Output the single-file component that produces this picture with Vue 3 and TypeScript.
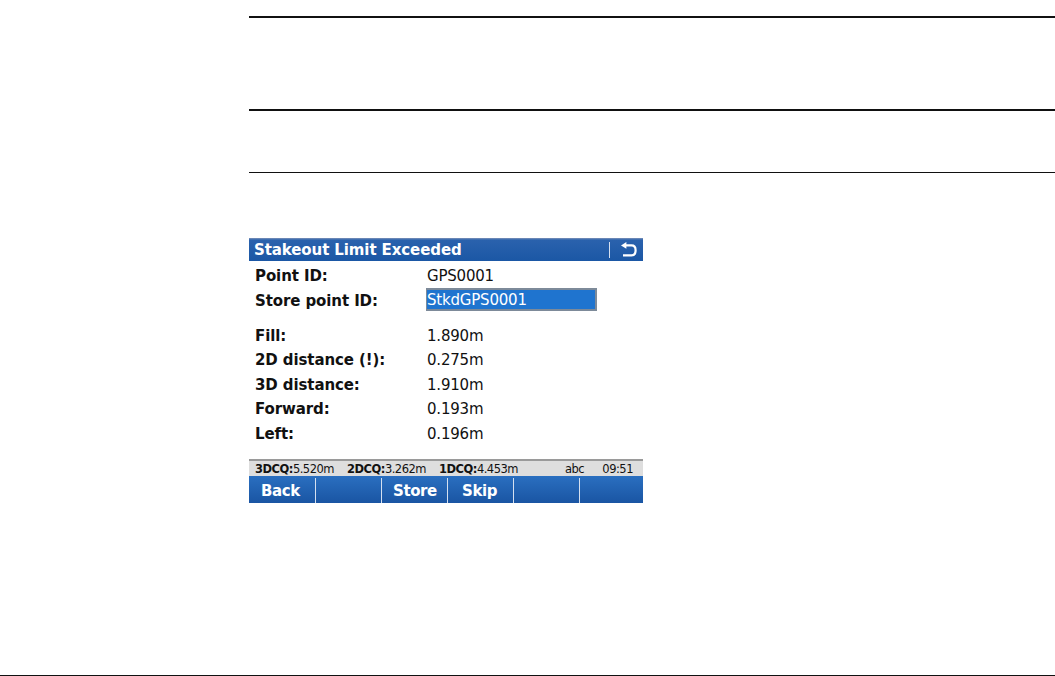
<template>
  <div class="page">
    <div class="rules">
      <div class="rule gap-a"></div>
      <div class="rule gap-b"></div>
      <div class="rule"></div>
    </div>

    <div class="screen">
      <div class="title-bar">
        <span class="title">Stakeout Limit Exceeded</span>
        <span class="title-sep"></span>
        <svg class="back-icon" width="18" height="16" viewBox="0 0 18 16">
          <path d="M4 3.4H11.5C14.2 3.4 15.6 5.2 15.6 8.2C15.6 11.2 14.2 13.4 11.5 13.4H3" fill="none" stroke="#fff" stroke-width="2.2" />
          <path d="M6.4 0L1 3.4L6.4 6.8Z" fill="#fff" />
        </svg>
      </div>

      <div class="form">
        <div class="row">
          <span class="label">Point ID:</span>
          <span class="value">GPS0001</span>
        </div>
        <div class="row">
          <span class="label">Store point ID:</span>
          <span class="input">StkdGPS0001</span>
        </div>
        <div class="results">
          <div v-for="r in results" :key="r.label" class="row">
            <span class="label">{{ r.label }}</span>
            <span class="value">{{ r.value }}</span>
          </div>
        </div>
      </div>

      <div class="status">
        <span v-for="q in quality" :key="q.label" class="cq"><b>{{ q.label }}</b>{{ q.value }}</span>
        <span class="abc">abc</span>
        <span class="clock">09:51</span>
      </div>

      <div class="softkeys">
        <div v-for="(k, i) in keys" :key="i" class="softkey">{{ k }}</div>
      </div>
    </div>

    <div class="footer-rule"></div>
  </div>
</template>

<script setup lang="ts">
const results = [
  { label: 'Fill:', value: '1.890m' },
  { label: '2D distance (!):', value: '0.275m' },
  { label: '3D distance:', value: '1.910m' },
  { label: 'Forward:', value: '0.193m' },
  { label: 'Left:', value: '0.196m' }
]

const quality = [
  { label: '3DCQ:', value: '5.520m' },
  { label: '2DCQ:', value: '3.262m' },
  { label: '1DCQ:', value: '4.453m' }
]

const keys = ['Back', '', 'Store', 'Skip', '', '']
</script>

<style>
html,
body {
  margin: 0;
  background: #fff;
  overflow: hidden;
}
</style>

<style scoped>
.page {
  width: 1055px;
  height: 676px;
  display: flex;
  flex-direction: column;
  font-family: "DejaVu Sans", sans-serif;
  color: #111;
}
.rules {
  margin: 16px 0 0 249px;
}
.rule {
  height: 1px;
  background: #111;
}
.gap-a {
  margin-bottom: 91px;
  height: 2px;
}
.gap-b {
  margin-bottom: 61px;
  height: 2px;
}
.screen {
  width: 394px;
  height: 265px;
  margin: 65px 0 0 249px;
  display: flex;
  flex-direction: column;
}
.title-bar {
  height: 23px;
  display: flex;
  align-items: center;
  padding: 0 5px;
  color: #fff;
  background: linear-gradient(#7f93b8 0, #2a62ad 2px, #1b57a5 100%);
}
.title {
  flex: 1;
  font-size: 15px;
  font-weight: 700;
  letter-spacing: -0.1px;
}
.title-sep {
  width: 1px;
  height: 16px;
  background: #d5e0f0;
  margin-right: 10px;
}
.form {
  flex: 1;
  padding-top: 3px;
}
.row {
  height: 24.5px;
  display: flex;
  align-items: center;
  padding-left: 6px;
}
.label {
  width: 172px;
  font-size: 15px;
  font-weight: 700;
  letter-spacing: -0.1px;
}
.value {
  font-size: 15px;
  letter-spacing: -0.2px;
}
.input {
  width: 171px;
  height: 23px;
  margin: 0 0 2px -1px;
  box-sizing: border-box;
  border: 2px solid #7d8a99;
  border-left-width: 1px;
  background: #1f74cf;
  color: #fff;
  font-size: 15px;
  line-height: 20px;
  letter-spacing: -0.2px;
}
.results {
  margin-top: 10.5px;
}
.status {
  height: 17px;
  box-sizing: border-box;
  display: flex;
  align-items: center;
  padding: 1px 5px 0 6px;
  border-top: 2px solid #9a9a9a;
  background: #dedede;
  font-size: 11.5px;
  letter-spacing: -0.5px;
  white-space: nowrap;
}
.cq {
  margin-right: 13px;
}
.abc {
  margin-left: 34px;
}
.clock {
  margin-left: auto;
  margin-right: 5px;
}
.softkeys {
  height: 27px;
  display: grid;
  grid-template-columns: 66px 66px 66px 66px 66px 64px;
  background: linear-gradient(#2a6fc0, #1a55a3);
  color: #fff;
}
.softkey {
  position: relative;
  padding-left: 12px;
  font-size: 15px;
  font-weight: 700;
  line-height: 30px;
  letter-spacing: -0.4px;
}
.softkey:nth-child(4) {
  padding-left: 15px;
}
.softkey:not(:last-child)::after {
  content: "";
  position: absolute;
  right: -1px;
  top: 2px;
  bottom: 3px;
  width: 1px;
  background: #d5e0f0;
}
.footer-rule {
  height: 1px;
  margin-top: auto;
  background: #111;
}
</style>
